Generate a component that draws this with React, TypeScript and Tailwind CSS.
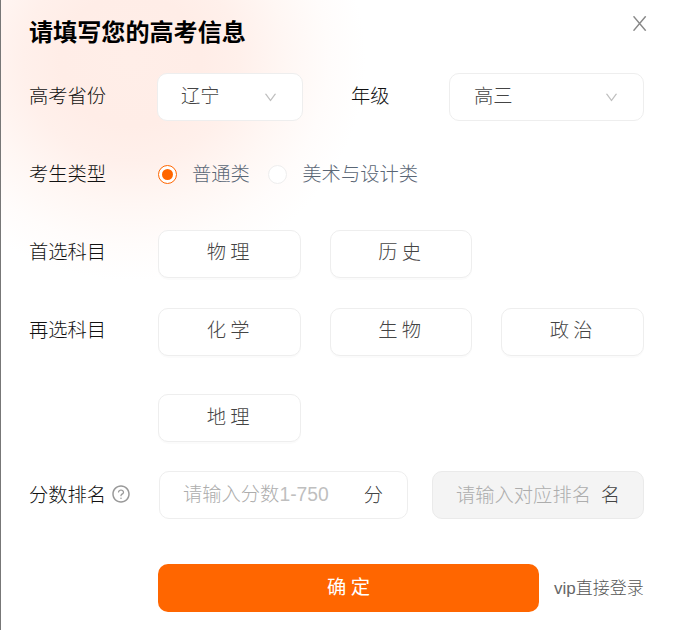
import React from 'react';
import { AiOutlineDown, AiOutlineQuestionCircle } from 'react-icons/ai';

interface FormRowProps {
  label?: string;
  hint?: boolean;
  className?: string;
  labelClassName?: string;
  children: React.ReactNode;
}

const FormRow: React.FC<FormRowProps> = ({ label, hint, className = '', labelClassName = '-mt-1', children }) => (
  <div className={`flex h-12 items-center ${className}`}>
    <div className="flex w-[129px] shrink-0 items-center text-[#111]">
      <span className={labelClassName}>{label}</span>
      {hint && <AiOutlineQuestionCircle className="-mt-[3px] ml-[5px] h-5 w-5 text-[#999]" />}
    </div>
    {children}
  </div>
);

const SelectBox: React.FC<{ value: string; className: string }> = ({ value, className }) => (
  <div
    className={`flex h-12 items-center justify-between rounded-[10px] border border-[#eee] bg-white text-[#444] ${className}`}
  >
    <span className="-mt-1">{value}</span>
    <AiOutlineDown className="h-[15px] w-[15px] text-[#bfbfbf]" />
  </div>
);

const SubjectButton: React.FC<{ name: string; className?: string }> = ({ name, className = 'pb-1.5' }) => (
  <button
    className={`h-12 w-[142.5px] rounded-[10px] border border-[#eee] bg-white pr-0.5 text-[#444] shadow-[0_2px_0_rgba(0,0,0,0.015)] ${className}`}
  >
    {name}
  </button>
);

const Radio: React.FC<{ label: string; checked?: boolean }> = ({ label, checked }) => (
  <label className="flex items-center text-[#5a6675]">
    <span
      className={`-mt-0.5 flex h-[19px] w-[19px] items-center justify-center rounded-full border bg-white ${
        checked ? 'border-[#ff6600]' : 'border-[#eee]'
      }`}
    >
      {checked && <span className="h-[11px] w-[11px] rounded-full bg-[#ff6600]" />}
    </span>
    <span className="-mt-1 ml-[15px]">{label}</span>
  </label>
);

const App: React.FC = () => {
  return (
    <div className="h-[630px] w-[673px] overflow-hidden border-l border-[#777] bg-white bg-[radial-gradient(ellipse_235px_220px_at_130px_60px,#ffeee8_0%,#ffede7_30%,#fff0eb_46%,#fff7f4_66%,#fffcfb_84%,#ffffff_100%)] pl-7 font-['Noto_Sans_CJK_SC','Liberation_Sans',sans-serif] text-[19.3px] leading-7 font-light">
      {/* Header */}
      <div className="flex h-[73px] w-[618px] items-start justify-between">
        <h2 className="mt-[13px] text-[24.1px] leading-9 font-bold text-black">请填写您的高考信息</h2>
        <svg className="mt-4 h-[15px] w-3.5" viewBox="0 0 14 15" fill="none" stroke="#888" strokeWidth={1.5}>
          <path d="M0.5 0.3L12.7 14.7M12.7 0.3L0.5 14.7" />
        </svg>
      </div>

      <FormRow label="高考省份">
        <SelectBox value="辽宁" className="-ml-px w-[146px] pr-6 pl-[23px]" />
        <span className="-mt-1 ml-12 w-[98px] text-[#111]">年级</span>
        <SelectBox value="高三" className="w-[195px] px-6" />
      </FormRow>

      <FormRow label="考生类型" className="mt-[30px]">
        <div className="flex gap-[18.5px]">
          <Radio label="普通类" checked />
          <Radio label="美术与设计类" />
        </div>
      </FormRow>

      {/* Subjects */}
      <FormRow label="首选科目" className="mt-[31px]" labelClassName="-mt-1.5">
        <div className="flex gap-[29px]">
          <SubjectButton name="物 理" />
          <SubjectButton name="历 史" />
        </div>
      </FormRow>
      <FormRow label="再选科目" className="mt-[30px]" labelClassName="-mt-1.5">
        <div className="flex gap-[29px]">
          <SubjectButton name="化 学" />
          <SubjectButton name="生 物" />
          <SubjectButton name="政 治" />
        </div>
      </FormRow>
      <FormRow className="mt-[38px]">
        <SubjectButton name="地 理" className="pb-1" />
      </FormRow>

      {/* Score and rank */}
      <FormRow label="分数排名" hint className="mt-[29px]" labelClassName="-mt-[3px]">
        <div className="ml-px flex h-12 w-[249px] items-center justify-between rounded-[10px] border border-[#eee] bg-white pr-6 pb-[3px] pl-[23px] text-[#444]">
          <span className="text-[#adadad]">
            请输入分数<span className="font-['Liberation_Sans'] font-normal text-[#bfbfbf]">1-750</span>
          </span>
          <span>分</span>
        </div>
        <div className="ml-6 flex h-12 w-[212px] items-center justify-between rounded-[10px] border border-[#eaeaea] bg-[#f4f4f4] pr-[23px] pb-[3px] pl-[23px] text-[#444]">
          <span className="text-[#adadad]">请输入对应排名</span>
          <span>名</span>
        </div>
      </FormRow>

      <FormRow className="mt-[45px]">
        <button className="h-12 w-[381px] rounded-[10px] bg-[#ff6600] pb-1 font-normal text-white">确 定</button>
        <a className="ml-[15px] text-[17px] whitespace-nowrap text-[#555]">
          <span className="font-['Liberation_Sans'] font-normal text-[#666]">vip</span>直接登录
        </a>
      </FormRow>
    </div>
  );
};

export default App;
